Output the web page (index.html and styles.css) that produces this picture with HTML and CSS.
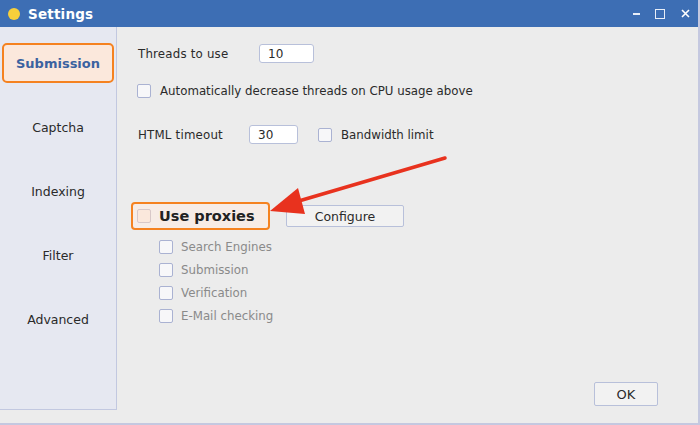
FILE: index.html
```html
<!DOCTYPE html>
<html>
<head>
<meta charset="utf-8">
<link rel="stylesheet" href="styles.css">
</head>
<body>
<div class="window">
  <div class="titlebar">
    <span class="dot"></span>
    <span class="title">Settings</span>
    <span class="spacer"></span>
    <span class="ctl min"></span>
    <span class="ctl max"></span>
    <svg class="ctl close" width="9" height="9" viewBox="0 0 9 9"><path d="M1 1L8 8M8 1L1 8" stroke="#fff" stroke-width="1.6"/></svg>
  </div>
  <div class="body">
    <div class="sidebar">
      <div class="tab active"><span class="tabbox">Submission</span></div>
      <div class="tab"><span class="tabbox">Captcha</span></div>
      <div class="tab"><span class="tabbox">Indexing</span></div>
      <div class="tab"><span class="tabbox">Filter</span></div>
      <div class="tab"><span class="tabbox">Advanced</span></div>
    </div>
    <div class="main">
      <div class="row r-threads">
        <span class="label w-threads">Threads to use</span>
        <span class="input in-threads">10</span>
      </div>
      <div class="row r-auto">
        <span class="cb"></span>
        <span class="label">Automatically decrease threads on CPU usage above</span>
      </div>
      <div class="row r-html">
        <span class="label w-html">HTML timeout</span>
        <span class="input in-html">30</span>
        <span class="cb cb-bw"></span>
        <span class="label">Bandwidth limit</span>
      </div>
      <div class="row r-proxy">
        <div class="proxybox">
          <span class="cb cb-peach"></span>
          <span class="big">Use proxies</span>
        </div>
        <span class="button configure">Configure</span>
      </div>
      <div class="subs">
        <div class="sub"><span class="cb"></span><span class="label dim">Search Engines</span></div>
        <div class="sub"><span class="cb"></span><span class="label dim">Submission</span></div>
        <div class="sub"><span class="cb"></span><span class="label dim">Verification</span></div>
        <div class="sub"><span class="cb"></span><span class="label dim">E-Mail checking</span></div>
      </div>
      <div class="footer">
        <span class="button ok">OK</span>
      </div>
    </div>
  </div>
  <svg class="arrow" width="700" height="425" viewBox="0 0 700 425">
    <line x1="445" y1="158" x2="292" y2="203" stroke="#e8321e" stroke-width="3.5" stroke-linecap="round"/>
    <polygon points="270,211 298,188 305,214" fill="#e8321e"/>
  </svg>
</div>
</body>
</html>
```
FILE: styles.css
```css
* { box-sizing: border-box; }
html, body { margin: 0; padding: 0; }
body {
  width: 700px;
  height: 425px;
  overflow: hidden;
  background: #ececec;
  font-family: "DejaVu Sans", "Liberation Sans", sans-serif;
  font-size: 11.8px;
  color: #2a2a2a;
}
.window {
  position: relative;
  width: 700px;
  height: 425px;
  display: flex;
  flex-direction: column;
  border-right: 2px solid #c4c8e0;
  border-bottom: 2px solid #c4c8e0;
}
.titlebar {
  height: 27px;
  background: #3d6eb4;
  display: flex;
  align-items: center;
  padding-left: 8px;
  padding-right: 8px;
  color: #fff;
}
.dot {
  width: 12px;
  height: 12px;
  border-radius: 50%;
  background: #f7cf3b;
  margin-right: 8px;
}
.title {
  font-weight: bold;
  font-size: 13.5px;
  letter-spacing: 0.2px;
}
.spacer { flex: 1; }
.ctl { display: block; }
.min {
  width: 7px;
  height: 2px;
  background: #e8eef8;
  margin-right: 15px;
  margin-top: 1px;
}
.max {
  width: 10px;
  height: 10px;
  border: 1px solid #e8eef8;
  margin-right: 16px;
}
.close { margin-right: 0; }
.body {
  flex: 1;
  display: flex;
  min-height: 0;
}
.sidebar {
  width: 117px;
  height: 383px;
  background: #e6e8f1;
  border-right: 1px solid #c2c8e0;
  border-bottom: 1px solid #c2c8e0;
  padding-top: 4px;
}
.tab {
  height: 64px;
  display: flex;
  align-items: center;
  padding: 0 2px;
}
.tabbox {
  width: 112px;
  height: 40px;
  display: flex;
  align-items: center;
  justify-content: center;
  font-size: 12.5px;
  color: #2a2a2a;
}
.active .tabbox {
  border: 2px solid #f58220;
  border-radius: 5px;
  background: #fbe8dc;
  color: #3b62a0;
  font-weight: bold;
  font-size: 13px;
}
.main {
  flex: 1;
  position: relative;
  padding-left: 20px;
  display: flex;
  flex-direction: column;
}
.row {
  display: flex;
  align-items: center;
}
.r-threads { margin-top: 17px; height: 19px; }
.r-auto { margin-top: 19px; height: 18px; }
.r-html { margin-top: 25px; height: 19px; }
.r-proxy { margin-top: 58px; height: 28px; margin-left: -6px; }
.label { white-space: nowrap; }
.w-threads { width: 122px; padding-left: 1px; letter-spacing: 0.2px; }
.w-html { width: 112px; padding-left: 1px; letter-spacing: 0.2px; }
.input {
  height: 19px;
  background: #fff;
  border: 1px solid #b8c0da;
  border-radius: 3px;
  display: flex;
  align-items: center;
  padding-left: 8px;
  font-size: 12px;
}
.in-threads { width: 55px; }
.in-html { width: 49px; }
.cb {
  width: 14px;
  height: 14px;
  border: 1px solid #aab2d2;
  border-radius: 2px;
  background: #f7f7f9;
  margin-right: 9px;
  flex: none;
}
.cb-bw { margin-left: 20px; margin-right: 9px; }
.proxybox {
  width: 139px;
  height: 28px;
  border: 2px solid #f58220;
  border-radius: 4px;
  background: #f7ece6;
  display: flex;
  align-items: center;
  padding-left: 4px;
}
.cb-peach { background: #fbe8dc; border-color: #d8c8c8; margin-right: 8px; }
.big {
  font-weight: bold;
  font-size: 14.5px;
  color: #222;
}
.button {
  display: flex;
  align-items: center;
  justify-content: center;
  background: #f2f2f2;
  border: 1px solid #b8c0da;
  border-radius: 2px;
  font-size: 12.5px;
  color: #2a2a2a;
}
.configure {
  width: 118px;
  height: 22px;
  margin-left: 16px;
}
.subs {
  display: flex;
  flex-direction: column;
  margin-left: 22px;
  margin-top: 5px;
}
.sub {
  height: 23px;
  display: flex;
  align-items: center;
}
.sub .cb { margin-right: 8px; }
.dim { color: #8a8a8a; }
.footer {
  margin-top: auto;
  margin-bottom: 17px;
  display: flex;
  justify-content: flex-end;
  padding-right: 40px;
}
.ok {
  width: 64px;
  height: 24px;
  font-size: 13px;
}
.arrow {
  position: absolute;
  left: 0;
  top: 0;
  pointer-events: none;
}
```
